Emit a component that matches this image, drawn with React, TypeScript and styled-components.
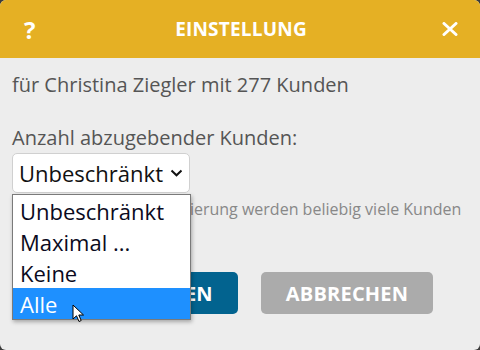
import * as React from 'react';
import styled, { createGlobalStyle } from 'styled-components';

const GlobalStyle = createGlobalStyle`
  html, body {
    margin: 0;
    padding: 0;
    background: #3c3c3c;
  }
  body {
    font-family: "Open Sans", "Liberation Sans", sans-serif;
  }
`;

const Dialog = styled.div`
  width: 480px;
  height: 350px;
  background: #ededed;
  border-radius: 6px;
  overflow: hidden;
  display: flex;
  flex-direction: column;
`;

const Header = styled.div`
  height: 58px;
  background: #e5b024;
  display: flex;
  align-items: center;
  justify-content: space-between;
  padding: 0 22px 0 24px;
  color: #fff;
`;

const HeaderIcon = styled.span`
  font-size: 24px;
  font-weight: 700;
  width: 16px;
  display: flex;
  align-items: center;
  justify-content: flex-start;
`;

const Title = styled.h1`
  margin: 0;
  font-size: 19px;
  font-weight: 700;
  letter-spacing: 0.2px;
`;

const Body = styled.div`
  padding: 13px 12px 0;
  display: flex;
  flex-direction: column;
`;

const Intro = styled.p`
  margin: 0 0 25px;
  font-size: 20px;
  line-height: 28px;
  color: #555;
`;

const Label = styled.label`
  font-size: 20px;
  line-height: 28px;
  color: #555;
`;

const SelectWrap = styled.div`
  position: relative;
  margin-top: 1px;
  width: 178px;
`;

const SelectBox = styled.div`
  height: 40px;
  box-sizing: border-box;
  background: #fff;
  border: 1px solid #d0d0d0;
  border-radius: 5px;
  display: flex;
  align-items: center;
  justify-content: space-between;
  padding: 0 6px 0 6px;
  font-size: 22px;
  color: #111;
`;

const ListBox = styled.ul`
  position: absolute;
  top: 41px;
  left: 0;
  width: 179px;
  box-sizing: border-box;
  margin: 0;
  padding: 0;
  list-style: none;
  background: #fff;
  border: 1px solid #7a7a7a;
  box-shadow: 1px 2px 4px rgba(0, 0, 0, 0.3);
  z-index: 2;
`;

const Option = styled.li<{ $active?: boolean }>`
  height: 31px;
  display: flex;
  align-items: center;
  padding: 0 7px;
  font-size: 22px;
  color: ${(p) => (p.$active ? '#fff' : '#0a0a20')};
  background: ${(p) => (p.$active ? '#1e90ff' : 'transparent')};
  position: relative;
`;

const Cursor = styled.svg`
  position: absolute;
  left: 59px;
  top: 16px;
`;

const Hint = styled.p`
  margin: 5px 0 0;
  font-size: 16px;
  line-height: 23px;
  color: #888;
`;

const Buttons = styled.div`
  display: flex;
  justify-content: center;
  gap: 23px;
  margin-top: 28px;
  padding-right: 3px;
`;

const Button = styled.button<{ $primary?: boolean }>`
  height: 42px;
  padding: 0 25px;
  border: none;
  border-radius: 5px;
  background: ${(p) => (p.$primary ? '#02638f' : '#ababab')};
  color: #fff;
  font-family: inherit;
  font-size: 20px;
  font-weight: 700;
  letter-spacing: 0.2px;
`;

const options = ['Unbeschränkt', 'Maximal ...', 'Keine', 'Alle'];

export default function App() {
  return (
    <>
      <GlobalStyle />
      <Dialog>
        <Header>
          <HeaderIcon>?</HeaderIcon>
          <Title>EINSTELLUNG</Title>
          <HeaderIcon>
            <svg width="16" height="14" viewBox="0 0 16 14">
              <path d="M2 1.5 L14 12.5 M14 1.5 L2 12.5" stroke="#fff" strokeWidth="3" strokeLinecap="round" />
            </svg>
          </HeaderIcon>
        </Header>
        <Body>
          <Intro>für Christina Ziegler mit 277 Kunden</Intro>
          <Label>Anzahl abzugebender Kunden:</Label>
          <SelectWrap>
            <SelectBox>
              <span>Unbeschränkt</span>
              <svg width="13" height="8" viewBox="0 0 13 8">
                <path d="M1.5 1.5 L6.5 6.3 L11.5 1.5" stroke="#111" strokeWidth="2" fill="none" />
              </svg>
            </SelectBox>
            <ListBox>
              {options.map((o) => (
                <Option key={o} $active={o === 'Alle'}>
                  {o}
                  {o === 'Alle' && (
                    <Cursor width="13" height="20" viewBox="0 0 13 20">
                      <path
                        d="M1 1 L1 15 L4.5 11.8 L7 17.5 L9.2 16.5 L6.8 11 L11.5 11 Z"
                        fill="#fff"
                        stroke="#000"
                        strokeWidth="1"
                        strokeLinejoin="round"
                      />
                    </Cursor>
                  )}
                </Option>
              ))}
            </ListBox>
          </SelectWrap>
          <Hint>Bei Auswahl: ohne Limitierung werden beliebig viele Kunden abgegeben.</Hint>
          <Buttons>
            <Button $primary>ÜBERNEHMEN</Button>
            <Button>ABBRECHEN</Button>
          </Buttons>
        </Body>
      </Dialog>
    </>
  );
}
